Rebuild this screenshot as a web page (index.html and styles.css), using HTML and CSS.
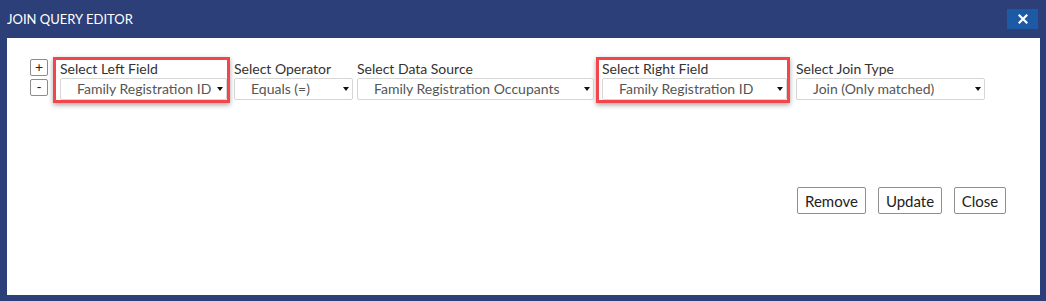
FILE: index.html
```html
<!DOCTYPE html>
<html>
<head>
<meta charset="utf-8">
<link rel="stylesheet" href="styles.css">
</head>
<body>
<div class="dialog">
  <div class="titlebar">
    <span class="title">JOIN QUERY EDITOR</span>
    <button class="close-x" aria-label="Close">
      <svg width="10" height="10" viewBox="0 0 10 10"><path d="M1.5 1.5 L8.5 8.5 M8.5 1.5 L1.5 8.5" stroke="#fff" stroke-width="2.2" stroke-linecap="square"/></svg>
    </button>
  </div>
  <div class="panel">
    <div class="row">
      <div class="pm">
        <div class="pm-btn">+</div>
        <div class="pm-btn">-</div>
      </div>
      <div class="group hl">
        <div class="label">Select Left Field</div>
        <div class="select w-left"><span>Family Registration ID</span><i class="caret"></i></div>
      </div>
      <div class="group">
        <div class="label">Select Operator</div>
        <div class="select w-op"><span>Equals (=)</span><i class="caret"></i></div>
      </div>
      <div class="group">
        <div class="label">Select Data Source</div>
        <div class="select w-ds"><span>Family Registration Occupants</span><i class="caret"></i></div>
      </div>
      <div class="group hl hl-right">
        <div class="label">Select Right Field</div>
        <div class="select w-right"><span>Family Registration ID</span><i class="caret"></i></div>
      </div>
      <div class="group join">
        <div class="label">Select Join Type</div>
        <div class="select w-join"><span>Join (Only matched)</span><i class="caret"></i></div>
      </div>
    </div>
    <div class="actions">
      <button class="btn b-remove">Remove</button>
      <button class="btn b-update">Update</button>
      <button class="btn b-close">Close</button>
    </div>
  </div>
</div>
</body>
</html>
```
FILE: styles.css
```css
html, body {
  margin: 0;
  padding: 0;
}
body {
  background: #2c3f79;
  font-family: Lato, "Open Sans", sans-serif;
  width: 1046px;
  height: 301px;
  overflow: hidden;
}
.dialog {
  display: flex;
  flex-direction: column;
  height: 301px;
}
.titlebar {
  height: 38px;
  display: flex;
  align-items: flex-start;
  justify-content: space-between;
  padding: 0 8px 0 7px;
  box-sizing: border-box;
}
.title {
  color: #ffffff;
  font-size: 13px;
  line-height: 16px;
  margin-top: 11px;
}
.close-x {
  margin-top: 9px;
  width: 31px;
  height: 20px;
  border: 0;
  padding: 0;
  background: #1d5aa6;
  display: flex;
  align-items: center;
  justify-content: center;
}
.panel {
  background: #ffffff;
  margin: 0 6px 6px 7px;
  flex: 1;
  padding: 19px 34px 0 23px;
  display: flex;
  flex-direction: column;
}
.row {
  display: flex;
  align-items: flex-start;
  gap: 4px;
}
.pm {
  display: flex;
  flex-direction: column;
  gap: 3px;
  margin-top: 2px;
  margin-right: 1px;
}
.pm-btn {
  width: 16px;
  height: 15px;
  border: 1px solid #8c8c8c;
  border-radius: 2px;
  font-size: 14px;
  line-height: 14px;
  text-align: center;
  color: #222;
}
.group {
  margin-top: 3px;
}
.group.hl {
  margin-top: 0;
  border: 3px solid #f2454c;
  padding: 0 0 0 4px;
  box-shadow: 0 2px 5px rgba(0, 0, 0, 0.35);
}
.group.hl-right {
  margin-left: -2px;
  padding-left: 3px;
}
.group.join {
  margin-left: 2px;
}
.label {
  font-size: 14px;
  line-height: 18px;
  color: #333;
  white-space: nowrap;
}
.select {
  position: relative;
  height: 22px;
  box-sizing: border-box;
  border: 1px solid #d6d6d6;
  border-radius: 2px;
  padding-left: 16px;
  font-size: 14px;
  line-height: 20px;
  color: #555;
  white-space: nowrap;
  display: flex;
  align-items: center;
}
.caret {
  position: absolute;
  right: 3px;
  top: 8px;
  width: 0;
  height: 0;
  border-left: 3.5px solid transparent;
  border-right: 3.5px solid transparent;
  border-top: 4px solid #111;
}
.w-left { width: 167px; }
.w-op { width: 119px; }
.w-ds { width: 237px; }
.w-right { width: 185px; }
.w-join { width: 189px; }
.actions {
  display: flex;
  justify-content: flex-end;
  gap: 12px;
  margin-top: 84px;
}
.btn {
  font-family: Lato, "Open Sans", sans-serif;
  font-size: 15px;
  height: 27px;
  padding: 0;
  background: #fff;
  border: 1px solid #8f8f8f;
  border-radius: 2px;
  color: #222;
}
.b-remove { width: 69px; }
.b-update { width: 64px; }
.b-close { width: 52px; }
```
